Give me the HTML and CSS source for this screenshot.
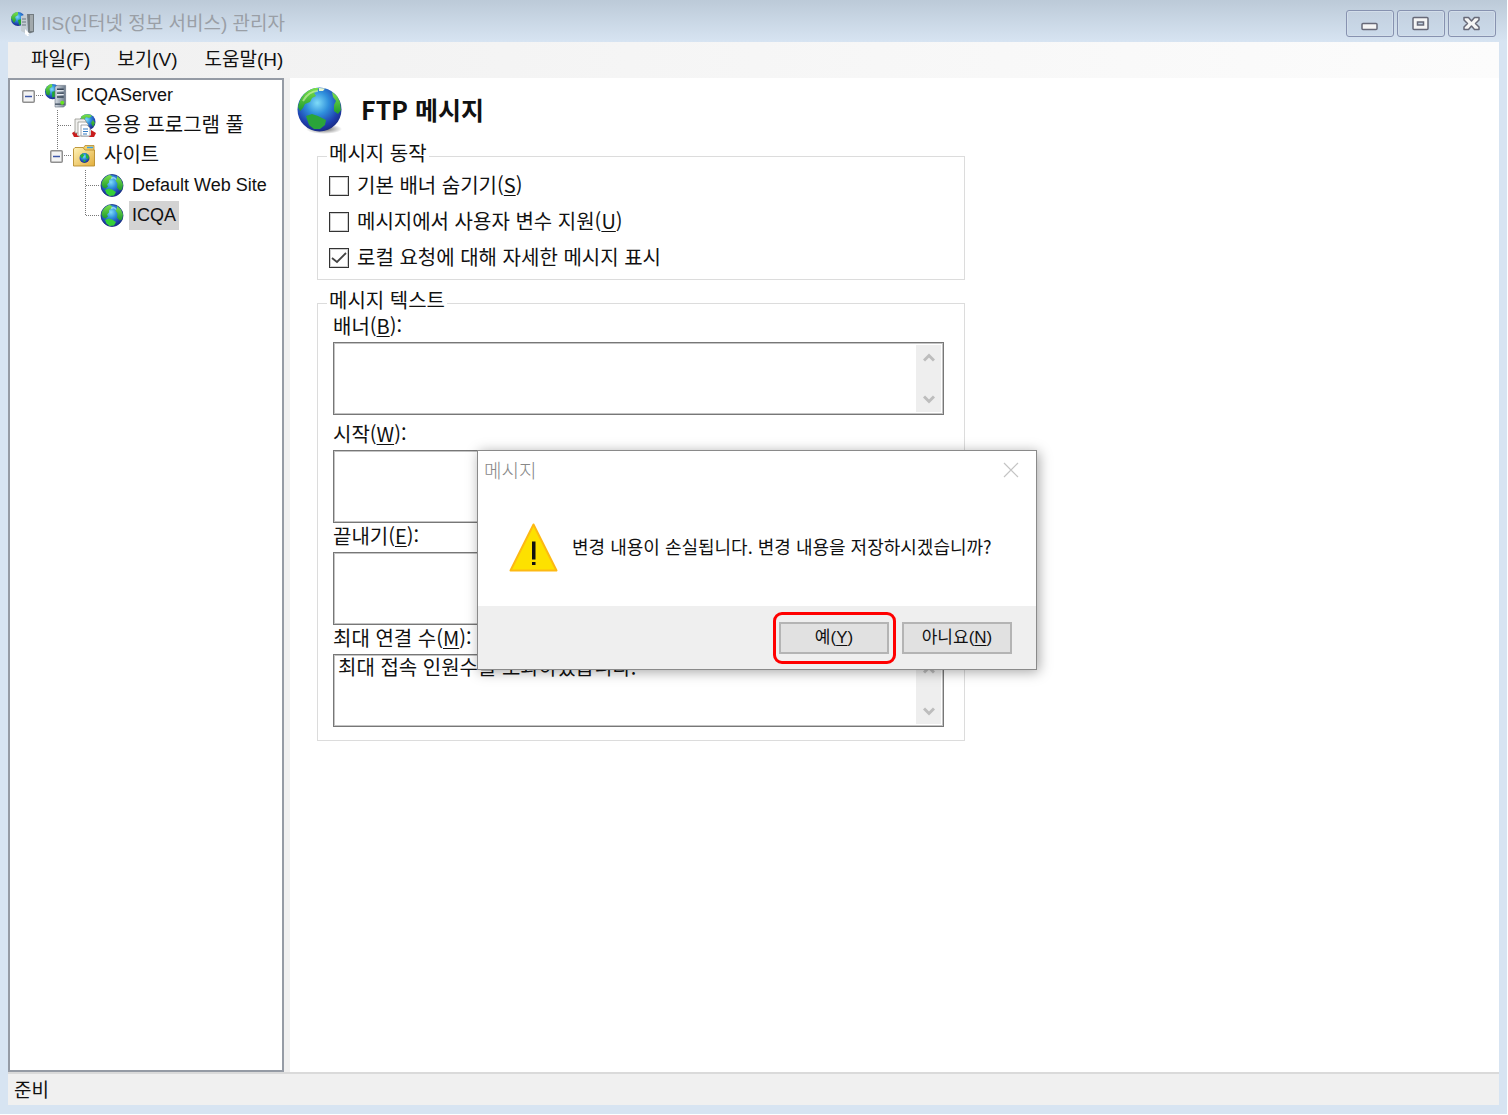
FILE: index.html
```html
<!DOCTYPE html>
<html lang="ko">
<head>
<meta charset="utf-8">
<title>IIS(인터넷 정보 서비스) 관리자</title>
<link rel="stylesheet" href="styles.css">
</head>
<body>
<svg class="defs" aria-hidden="true">
  <defs>
    <radialGradient id="sea" cx="45%" cy="35%" r="65%">
      <stop offset="0" stop-color="#7fdcf8"/><stop offset=".4" stop-color="#2f8fdc"/><stop offset=".8" stop-color="#1f3fae"/><stop offset="1" stop-color="#1a2c86"/>
    </radialGradient>
    <linearGradient id="land" x1="0" y1="0" x2="0" y2="1">
      <stop offset="0" stop-color="#7be04c"/><stop offset="1" stop-color="#1e9a2c"/>
    </linearGradient>
    <linearGradient id="paper" x1="0" y1="0" x2="1" y2="1">
      <stop offset="0" stop-color="#fff3b8"/><stop offset="1" stop-color="#e2ae3c"/>
    </linearGradient>
    <linearGradient id="metal" x1="0" y1="0" x2="1" y2="0">
      <stop offset="0" stop-color="#d5dce4"/><stop offset="1" stop-color="#6d7b8b"/>
    </linearGradient>
    <radialGradient id="shade"><stop offset="0" stop-color="#000" stop-opacity=".6"/><stop offset="1" stop-color="#000" stop-opacity="0"/></radialGradient>
  </defs>
  <symbol id="globe" viewBox="0 0 24 24">
    <circle cx="12" cy="12" r="11" fill="url(#sea)" stroke="#17307f" stroke-width=".8"/>
    <path d="M1.500 11C2 6 6 2 10 1.500L12.500 3 11 5.500 9 6.500 9 9 7 11 8 13 5.500 15 3 14Z" fill="url(#land)"/>
    <path d="M17 2.500 21 6 23 11 22 16 19.500 17 17 14 17.500 10 15.500 7 17 5Z" fill="url(#land)"/>
    <path d="M5 16.500 8.500 15 12 16 16 18.500 14 22 9.500 22.500 6.500 20Z" fill="#35d038"/>
    <path d="M11 5C13 3.500 15 4 16 6" fill="none" stroke="#cdf5ff" stroke-width="1.500" opacity=".6"/>
  </symbol>
  <symbol id="server" viewBox="0 0 24 26">
    <circle cx="8.500" cy="9" r="8" fill="url(#sea)"/>
    <path d="M1 7C2 4 5 1 8 1L8 4 5 6 6 9 5 13 2 12Z" fill="url(#land)"/>
    <path d="M8 9 12 8 12 14 8 15Z" fill="#21a832"/>
    <path d="M11 4 13 2.500H22V23L20 25H11Z" fill="url(#metal)" stroke="#5e6b7b" stroke-width=".6"/>
    <path d="M13 6.500H20M13 10.500H20M13 14.500H20" stroke="#374556" stroke-width="1.500"/>
    <path d="M13 8H20M13 12H20" stroke="#eef3f7"/>
    <path d="M11 22H21" stroke="#465465" stroke-width="1.500"/>
    <circle cx="18.500" cy="20.500" r="2" fill="#66e51e"/>
  </symbol>
  <symbol id="pool" viewBox="0 0 24 25">
    <circle cx="15.500" cy="9" r="8" fill="url(#sea)"/>
    <path d="M9 4C12 0 18 1 20 3L17 5 14 4 12 7 9 7ZM21 7 23 10 21 14 19 10Z" fill="url(#land)"/>
    <path d="M0 20 5 17 5 22 8 24 2 24ZM24 20 19 17 19 22 16 24 22 24Z" fill="#c91d1d"/>
    <path d="M3 6H12L14 8V20H3Z" fill="#f0f0ee" stroke="#94948e" stroke-width=".8"/>
    <path d="M6 9H14L16 11V23H6Z" fill="#fff" stroke="#94948e" stroke-width=".8"/>
    <path d="M9 12H15L18 15V23H9Z" fill="#fff" stroke="#8b9299" stroke-width=".8"/>
    <path d="M11 16H16M11 18.500H16M11 21H15" stroke="#347cc4" stroke-width="1.200"/>
  </symbol>
  <symbol id="folder" viewBox="0 0 24 24">
    <path d="M11 5 13 2H22V10H11Z" fill="#f4d06a" stroke="#b58a2c" stroke-width=".8"/>
    <path d="M15 4H21" stroke="#3aa0e8" stroke-width="1.500"/>
    <path d="M1.500 5.500 3 4H11L13 6.500H22.500V22.500H1.500Z" fill="url(#paper)" stroke="#b98d2d" stroke-width=".9"/>
    <circle cx="12.500" cy="14.500" r="5" fill="url(#sea)"/>
    <path d="M8 12 11 10 12 12 10 15ZM14 10 17 13 16 16 14 14ZM11 16 14 17 12 19Z" fill="#28b437"/>
  </symbol>
  <symbol id="twig" viewBox="0 0 13 13">
    <rect x=".75" y=".75" width="11.500" height="11.500" rx="1" fill="#f3f3f3" stroke="#8f8f8f" stroke-width="1.500"/>
    <path d="M3 6.500H10" stroke="#3c56a8" stroke-width="1.500"/>
  </symbol>
  <symbol id="chevron-up" viewBox="0 0 12 9"><path d="M1 7.500 6 2.500 11 7.500" fill="none" stroke="#bdbdbd" stroke-width="3"/></symbol>
  <symbol id="chevron-down" viewBox="0 0 12 9"><path d="M1 1.500 6 6.500 11 1.500" fill="none" stroke="#bdbdbd" stroke-width="3"/></symbol>
</svg>

<div class="window">
  <header class="titlebar">
    <svg class="app-icon" viewBox="0 0 26 26" aria-hidden="true">
      <circle cx="8" cy="8" r="7" fill="url(#sea)"/>
      <path d="M1 7C2 3 5 1 8 1L8 4 5 6 6 9 4 12Z" fill="url(#land)"/>
      <path d="M8 9 12 8 12 13 9 14Z" fill="#21a832"/>
      <path d="M11 5 17 3V23L11 20Z" fill="#c3ccd3"/>
      <path d="M12 8H16M12 11H16M12 14H16" stroke="#6a7680"/>
      <path d="M17 3H24V21L18 23Z" fill="#727b80"/>
      <path d="M20 4H23V20H20Z" fill="#a2a9ac"/>
      <path d="M15 18 20 23 18 23 19 25 17 25 16 23 15 24Z" fill="#fff"/>
    </svg>
    <h1 class="title">IIS(인터넷 정보 서비스) 관리자</h1>
    <div class="window-buttons">
      <button class="window-button" type="button" aria-label="최소화">
        <svg viewBox="0 0 20 16" width="20" height="16"><rect x="2" y="7.500" width="15" height="6" rx="1" fill="#f5f5f5" stroke="#676978" stroke-width="1.500"/></svg>
      </button>
      <button class="window-button" type="button" aria-label="최대화">
        <svg viewBox="0 0 20 16" width="20" height="16"><rect x="2" y="1.500" width="15" height="12" rx="1" fill="#f5f5f5" stroke="#676978" stroke-width="1.500"/><rect x="6.500" y="6" width="6" height="3" fill="#c3d2e2" stroke="#676978" stroke-width="1.500"/></svg>
      </button>
      <button class="window-button" type="button" aria-label="닫기">
        <svg viewBox="0 0 20 16" width="20" height="16"><path d="M2 1.500H6.500L9.500 5 12.500 1.500H17V4L13.500 7.500 17 11V13.500H12.500L9.500 10 6.500 13.500H2V11L5.500 7.500 2 4Z" fill="#f5f5f5" stroke="#676978" stroke-width="1.500" stroke-linejoin="round"/></svg>
      </button>
    </div>
  </header>

  <div class="client">
    <nav class="menubar">
      <button class="menu" type="button">파일(F)</button>
      <button class="menu" type="button">보기(V)</button>
      <button class="menu" type="button">도움말(H)</button>
    </nav>

    <div class="panes">
      <aside class="tree">
        <ul class="branch">
          <li>
            <div class="node">
              <svg class="lines" viewBox="0 0 22 30"><path class="dots" d="M14 15.500H22"/><use href="#twig" x="0" y="10" width="13" height="13"/></svg>
              <svg class="node-icon"><use href="#server"/></svg><span class="label latin">ICQAServer</span>
            </div>
            <ul class="branch">
              <li class="node">
                <svg class="lines" viewBox="0 0 22 30"><path class="dots" d="M7.500 0V30M8 15.500H22"/></svg>
                <svg class="node-icon"><use href="#pool"/></svg><span class="label">응용 프로그램 풀</span>
              </li>
              <li>
                <div class="node">
                  <svg class="lines" viewBox="0 0 22 30"><path class="dots" d="M7.500 0V10M14 15.500H22"/><use href="#twig" x="0" y="10" width="13" height="13"/></svg>
                  <svg class="node-icon"><use href="#folder"/></svg><span class="label">사이트</span>
                </div>
                <ul class="branch">
                  <li class="node">
                    <svg class="lines" viewBox="0 0 22 30"><path class="dots" d="M7.500 0V30M8 15.500H22"/></svg>
                    <svg class="node-icon"><use href="#globe"/></svg><span class="label latin">Default Web Site</span>
                  </li>
                  <li class="node">
                    <svg class="lines" viewBox="0 0 22 30"><path class="dots" d="M7.500 0V15M8 15.500H22"/></svg>
                    <svg class="node-icon"><use href="#globe"/></svg><span class="label latin selected">ICQA</span>
                  </li>
                </ul>
              </li>
            </ul>
          </li>
        </ul>
      </aside>

      <main class="content">
        <div class="page-head">
          <svg class="page-icon" viewBox="0 0 46 48" aria-hidden="true">
            <ellipse cx="27" cy="42" rx="18" ry="5" fill="url(#shade)"/>
            <circle cx="22.500" cy="22.500" r="22" fill="url(#sea)"/>
            <path d="M1 20C3 10 9 3 18 1L22 1 20 4 17 6 19 9 15 11 13 15 8 17 6 21 3 24Z" fill="url(#land)"/>
            <path d="M22 1 28 1.500 26 4 22 4Z" fill="#e9f7d0"/>
            <path d="M35 5 40 9 43 15 44 23 41 27 37 24 37 18 39 14 36 10Z" fill="url(#land)"/>
            <path d="M9 29 15 27 21 29 29 33 28 38 23 42 17 42 12 38Z" fill="#2aa43a"/>
            <path d="M6 14C10 7 16 4 21 4" fill="none" stroke="#efffc9" stroke-width="2" opacity=".5"/>
          </svg>
          <h2 class="page-title">FTP 메시지</h2>
        </div>

        <form class="settings">
          <fieldset class="group">
            <legend>메시지 동작</legend>
            <div class="options">
              <label class="option"><input type="checkbox"><span>기본 배너 숨기기(<u>S</u>)</span></label>
              <label class="option"><input type="checkbox"><span>메시지에서 사용자 변수 지원(<u>U</u>)</span></label>
              <label class="option"><input type="checkbox" checked><span>로컬 요청에 대해 자세한 메시지 표시</span></label>
            </div>
          </fieldset>

          <fieldset class="group">
            <legend>메시지 텍스트</legend>
            <div class="fields">
              <div class="field spaced">
                <label for="banner">배너(<u>B</u>):</label>
                <div class="memo"><textarea id="banner"></textarea><div class="scroll"><svg><use href="#chevron-up"/></svg><svg><use href="#chevron-down"/></svg></div></div>
              </div>
              <div class="field">
                <label for="welcome">시작(<u>W</u>):</label>
                <div class="memo"><textarea id="welcome"></textarea><div class="scroll"><svg><use href="#chevron-up"/></svg><svg><use href="#chevron-down"/></svg></div></div>
              </div>
              <div class="field">
                <label for="exit">끝내기(<u>E</u>):</label>
                <div class="memo"><textarea id="exit"></textarea><div class="scroll"><svg><use href="#chevron-up"/></svg><svg><use href="#chevron-down"/></svg></div></div>
              </div>
              <div class="field">
                <label for="max">최대 연결 수(<u>M</u>):</label>
                <div class="memo"><textarea id="max">최대 접속 인원수를 초과하였습니다.</textarea><div class="scroll"><svg><use href="#chevron-up"/></svg><svg><use href="#chevron-down"/></svg></div></div>
              </div>
            </div>
          </fieldset>
        </form>
      </main>
    </div>

    <footer class="statusbar">준비</footer>
  </div>

  <section class="dialog" role="dialog" aria-labelledby="dialog-title">
    <div class="dialog-head">
      <h2 class="dialog-title" id="dialog-title">메시지</h2>
      <button class="dialog-close" type="button" aria-label="닫기"><svg viewBox="0 0 16 16" width="16" height="16"><path d="M1 1 15 15M15 1 1 15" stroke="#c4c4c4" stroke-width="1.200"/></svg></button>
    </div>
    <div class="dialog-body">
      <svg class="warning" viewBox="0 0 49 49" aria-hidden="true">
        <path d="M24.500 1.500 47.500 47.500H1.500Z" fill="#fde100" stroke="#fdb913" stroke-width="2" stroke-linejoin="round"/>
        <path d="M23 18.500H26.500V36.500H23ZM23 39H26.500V42H23Z" fill="#111"/>
      </svg>
      <p class="dialog-text">변경 내용이 손실됩니다. 변경 내용을 저장하시겠습니까?</p>
    </div>
    <div class="dialog-foot">
      <button class="choice marked" type="button">예(<u>Y</u>)</button>
      <button class="choice" type="button">아니요(<u>N</u>)</button>
    </div>
  </section>
</div>
</body>
</html>
```

FILE: styles.css
```css
* { box-sizing: border-box; }

body {
  margin: 0;
  padding: 0 1px 1px 0;
  min-height: 100vh;
  display: flex;
  background: #fff;
  color: #111;
  font: 20px/24px "Noto Sans CJK KR", sans-serif;
}

h1, h2, p, ul { margin: 0; padding: 0; font-weight: 400; }
button, textarea { font: inherit; color: inherit; }
u { text-underline-offset: 2px; text-decoration-thickness: 1px; }
.defs { position: absolute; width: 0; height: 0; }

/* Window frame */
.window {
  flex: 1;
  position: relative;
  display: flex;
  flex-direction: column;
  padding: 0 8px 9px;
  background: linear-gradient(#bccad8, #d7e4f2 42px);
}

.titlebar {
  height: 42px;
  display: flex;
  align-items: center;
  gap: 5px;
  padding: 5px 3px 0 2px;
}
.app-icon { width: 26px; height: 26px; }
.title {
  flex: 1;
  color: #9a9fa6;
  font: 19px/24px "Liberation Sans", "Noto Sans CJK KR", sans-serif;
}
.window-buttons { display: flex; gap: 3px; }
.window-button {
  width: 48px;
  height: 27px;
  display: grid;
  place-items: center;
  padding: 0;
  border: 1px solid #8792b0;
  border-radius: 3px;
  background: linear-gradient(#c3d0df, #cbdaea);
  box-shadow: inset 0 0 0 1px #d3deea;
}

.client {
  flex: 1;
  display: flex;
  flex-direction: column;
  background: #f0f0f0;
}

.menubar {
  height: 36px;
  display: flex;
  align-items: center;
  gap: 27px;
  padding: 0 23px;
  background: linear-gradient(90deg, #f0f0f0, #fcfcfc);
}
.menu {
  padding: 0;
  border: 0;
  background: none;
  font: 19px/24px "Liberation Sans", "Noto Sans CJK KR", sans-serif;
}

.panes { flex: 1; display: flex; gap: 6px; }

/* Connections tree */
.tree {
  width: 276px;
  padding: 0 12px;
  border: 2px solid #959ba5;
  background: #fff;
}
.branch { list-style: none; }
.branch .branch { padding-left: 28px; }
.node { height: 30px; display: flex; align-items: center; white-space: nowrap; }
.lines { width: 22px; height: 30px; flex: none; }
.dots { fill: none; stroke: #777; stroke-dasharray: 1 1; }
.node-icon { width: 24px; height: 25px; flex: none; }
.label { margin-left: 5px; padding: 0 3px 3px; line-height: 26px; }
.latin { padding-bottom: 0; font-family: "Liberation Sans", sans-serif; font-size: 18px; line-height: 29px; }
.selected { background: #d3d3d3; }

/* FTP messages page */
.content { flex: 1; padding: 0 0 24px 7px; background: #fff; }
.page-head { height: 66px; display: flex; align-items: center; gap: 18px; }
.page-icon { width: 46px; height: 48px; }
.page-title { padding-bottom: 5px; font-size: 25px; line-height: 30px; font-weight: 700; }

.settings {
  max-width: 668px;
  display: grid;
  gap: 11px;
  padding-left: 20px;
}
.group {
  min-width: 0;
  margin: 0;
  padding: 0 20px 0 9px;
  border: 1px solid #dcdcdc;
}
.group legend { padding: 0 2px 6px; line-height: 18px; }

.options { padding: 0 0 3px 2px; }
.option { height: 36px; display: flex; align-items: center; gap: 8px; }
.option span { padding-bottom: 2px; }
.option input {
  appearance: none;
  width: 20px;
  height: 20px;
  margin: 0;
  border: 1px solid #333;
  outline: 1px solid #d0d0d0;
  outline-offset: -2px;
  background: #fff;
}
.option input:checked {
  background: #fff url("data:image/svg+xml,%3Csvg xmlns='http://www.w3.org/2000/svg' viewBox='0 0 18 18'%3E%3Cpath d='M2 9 7 13 16 4' fill='none' stroke='%23444' stroke-width='1.800'/%3E%3C/svg%3E");
}

.fields { display: grid; gap: 2px; padding: 0 0 13px 6px; }
.field label { display: block; width: max-content; margin-bottom: 5px; line-height: 22px; }
.spaced { margin-bottom: 6px; }
.memo {
  height: 73px;
  display: flex;
  padding: 1px;
  border: 1px solid #777;
  box-shadow: inset 0 0 0 1px #c4c4c4;
}
.memo textarea {
  flex: 1;
  min-width: 0;
  padding: 0 3px;
  border: 0;
  outline: 0;
  background: none;
  line-height: 22px;
  resize: none;
  overflow: hidden;
}
.scroll {
  width: 25px;
  display: flex;
  flex-direction: column;
  align-items: center;
  justify-content: space-between;
  margin: 1px;
  padding: 8px 0;
  background: #eee;
}
.scroll svg { width: 12px; height: 9px; }

.statusbar {
  height: 33px;
  padding: 3px 6px;
  border-top: 2px solid #dadada;
  font-size: 19px;
}

/* Confirmation dialog, floating over the window */
.dialog {
  position: absolute;
  left: 477px;
  top: 450px;
  width: 560px;
  border: 1px solid #8a8a8a;
  background: #fff;
  box-shadow: 2px 2px 12px rgba(0, 0, 0, .35);
}
.dialog-head {
  height: 38px;
  display: flex;
  align-items: center;
  justify-content: space-between;
  padding: 0 17px 0 6px;
}
.dialog-title { color: #888; font-size: 19px; line-height: 24px; font-weight: 300; }
.dialog-close { display: grid; padding: 0; border: 0; background: none; }
.dialog-body {
  height: 117px;
  display: flex;
  align-items: center;
  gap: 14px;
  padding: 0 31px;
}
.warning { width: 49px; height: 49px; flex: none; }
.dialog-text { padding-bottom: 4px; font-size: 18px; white-space: nowrap; }
.dialog-foot {
  display: flex;
  justify-content: flex-end;
  gap: 13px;
  padding: 16px 24px 15px;
  background: #efefef;
}
.choice {
  position: relative;
  width: 110px;
  height: 32px;
  padding: 0;
  border: 2px solid #b4b4b4;
  background: #e1e1e1;
  font: 17px/24px "Liberation Sans", "Noto Sans CJK KR", sans-serif;
}
.marked::after {
  content: "";
  position: absolute;
  inset: -12px -9px -12px -8px;
  border: 3px solid #f00;
  border-radius: 9px;
}
```
